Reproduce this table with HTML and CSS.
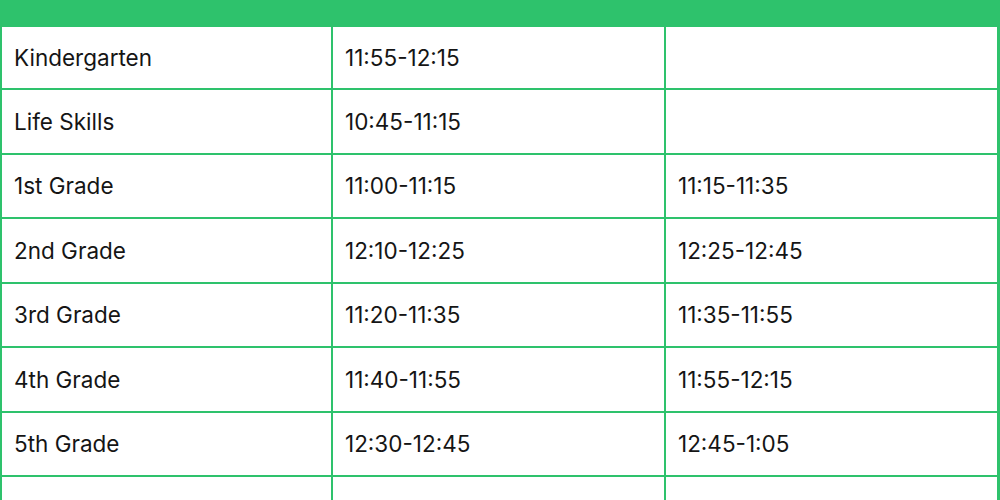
FILE: index.html
```html
<!DOCTYPE html>
<html lang="en">
<head>
<meta charset="utf-8">
<title>Lunch and Recess Schedule</title>
<link rel="stylesheet" href="styles.css">
</head>
<body>
<div class="schedule">
  <div class="cell head">Grade</div>
  <div class="cell head">Lunch</div>
  <div class="cell head">Recess</div>

  <div class="cell">Kindergarten</div>
  <div class="cell">11:55-12:15</div>
  <div class="cell"></div>

  <div class="cell">Life Skills</div>
  <div class="cell">10:45-11:15</div>
  <div class="cell"></div>

  <div class="cell">1st Grade</div>
  <div class="cell">11:00-11:15</div>
  <div class="cell">11:15-11:35</div>

  <div class="cell">2nd Grade</div>
  <div class="cell">12:10-12:25</div>
  <div class="cell">12:25-12:45</div>

  <div class="cell">3rd Grade</div>
  <div class="cell">11:20-11:35</div>
  <div class="cell">11:35-11:55</div>

  <div class="cell">4th Grade</div>
  <div class="cell">11:40-11:55</div>
  <div class="cell">11:55-12:15</div>

  <div class="cell">5th Grade</div>
  <div class="cell">12:30-12:45</div>
  <div class="cell">12:45-1:05</div>

  <div class="cell">6th Grade</div>
  <div class="cell">12:50-1:05</div>
  <div class="cell">1:05-1:25</div>
</div>
</body>
</html>
```

FILE: styles.css
```css
html, body {
  margin: 0;
  padding: 0;
  background: #ffffff;
  overflow: hidden;
  height: 500px;
}

.schedule {
  width: 999px;
  margin-top: -45px;
  display: grid;
  grid-template-columns: 329px 331px 331px;
  grid-template-rows: 70px 61px repeat(7, 62.5px);
  gap: 2px;
  padding: 0 2px 2px 2px;
  background: #2ec26c;
  font-family: "Inter", "Noto Sans", sans-serif;
  font-size: 22.5px;
  color: #151515;
}

.cell {
  background: #ffffff;
  display: flex;
  align-items: center;
  padding-left: 12px;
}

.cell.head {
  background: #2ec26c;
  justify-content: center;
  padding-left: 0;
  font-weight: 700;
  color: #2a7048;
}
```
